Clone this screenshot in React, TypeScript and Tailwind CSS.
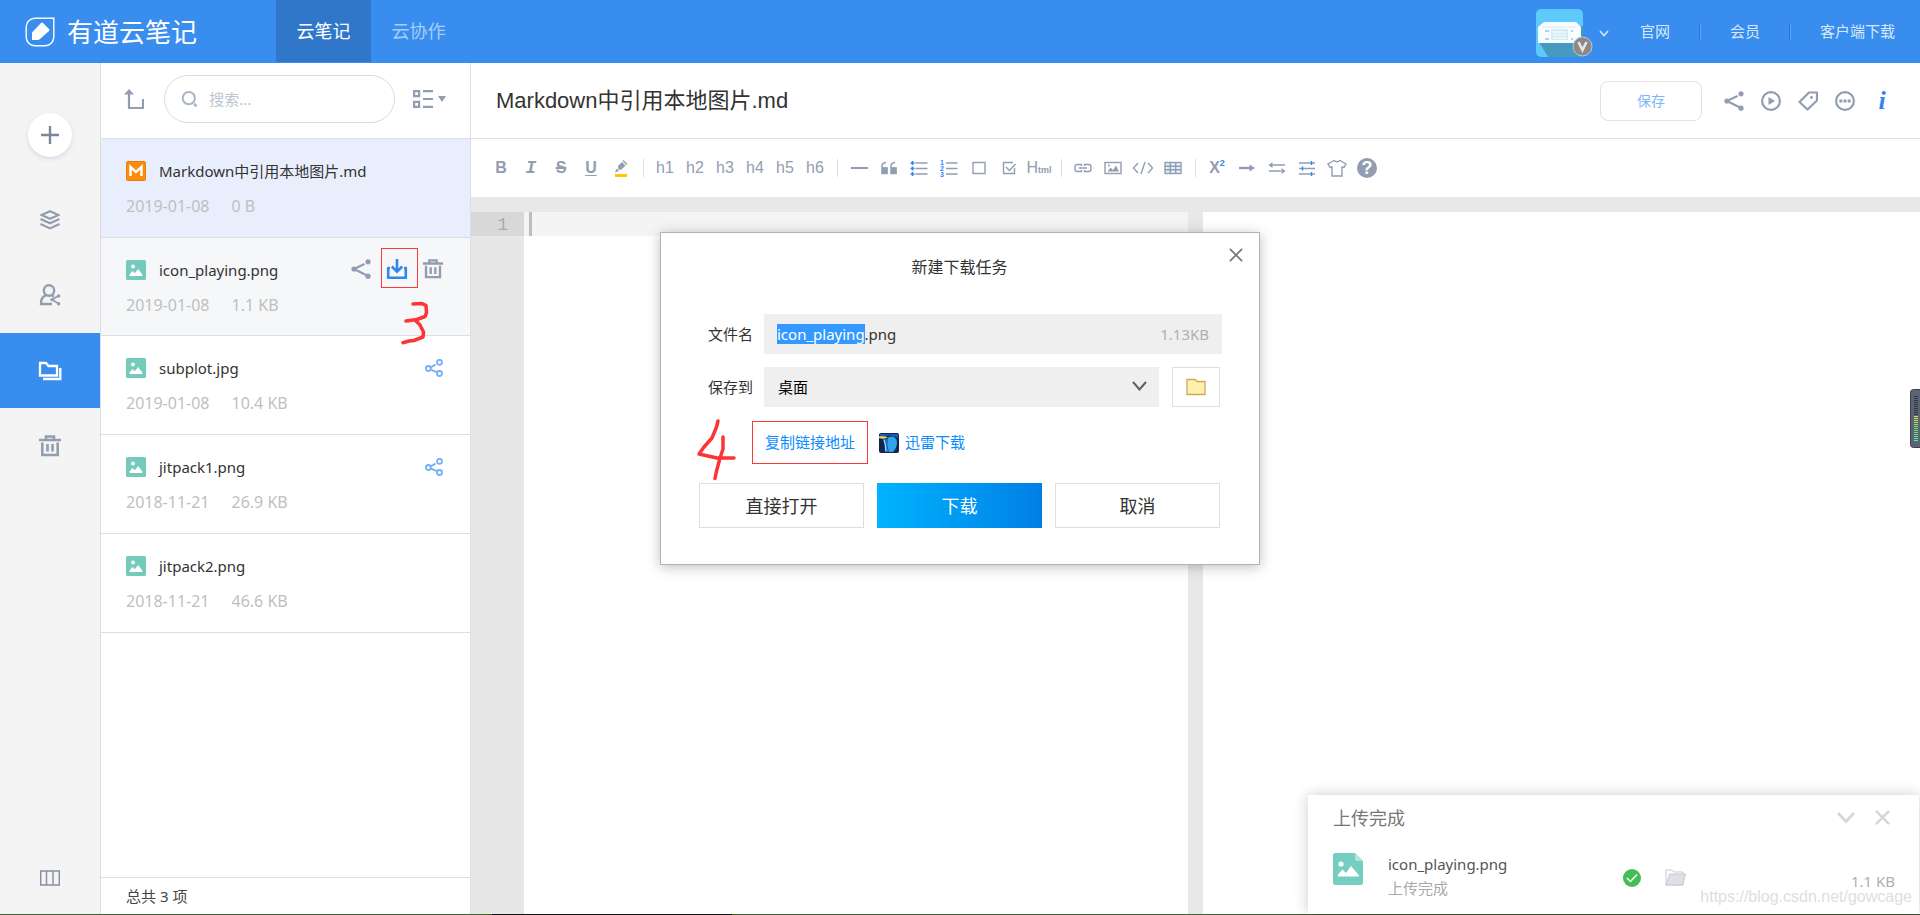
import { useEffect, useRef } from "react";
import type { ReactNode } from "react";

type IconProps = { className?: string };

const files = [
  { name: "Markdown中引用本地图片.md", date: "2019-01-08", size: "0 B", kind: "md", state: "selected" },
  { name: "icon_playing.png", date: "2019-01-08", size: "1.1 KB", kind: "img", state: "hover" },
  { name: "subplot.jpg", date: "2019-01-08", size: "10.4 KB", kind: "img", state: "shared" },
  { name: "jitpack1.png", date: "2018-11-21", size: "26.9 KB", kind: "img", state: "shared" },
  { name: "jitpack2.png", date: "2018-11-21", size: "46.6 KB", kind: "img", state: "" },
];

const rowStyle: Record<string, string> = {
  selected: "h-[99px] bg-[#e8eefb]",
  hover: "h-[98px] bg-[#f6f7f9]",
};

/* ---------- icons ---------- */

function LogoIcon() {
  return (
    <svg width="30" height="30" viewBox="0 0 30 30" fill="none">
      <path d="M10 1.2H28.8V20a8.8 8.8 0 0 1-8.8 8.8H10A8.8 8.8 0 0 1 1.2 20V10A8.8 8.8 0 0 1 10 1.2Z" stroke="#fff" strokeWidth="1.4" />
      <path d="M7 23V15.5L16 6q1-1 2 0l6 6q1 1 0 2l-9 8q-1 1-2 1Z" fill="#fff" />
    </svg>
  );
}

function ShareIcon({ className }: IconProps) {
  return (
    <svg width="20" height="20" viewBox="0 0 20 20" className={className} fill="currentColor">
      <path d="M13.500 5 3 10l14 7" stroke="currentColor" strokeWidth="2.200" fill="none" />
      <circle cx="17" cy="2.8" r="2.6" />
      <circle cx="3" cy="10" r="2.6" />
      <circle cx="17" cy="17.2" r="2.6" />
    </svg>
  );
}

function SharedIcon() {
  return (
    <svg width="18" height="18" viewBox="0 0 18 18" fill="none" stroke="#75aff5" strokeWidth="1.8">
      <circle cx="14.5" cy="3.3" r="2.5" />
      <circle cx="3.3" cy="9.5" r="2.5" />
      <circle cx="14.5" cy="14.5" r="2.5" />
      <path d="m5.8 8.2 4.7-2.6M5.8 10.6l6 2.6" />
    </svg>
  );
}

function TrashIcon({ className }: IconProps) {
  return (
    <svg width="22" height="22" viewBox="0 0 22 22" className={className} fill="none" stroke="currentColor" strokeWidth="2.6">
      <path d="M0 5h22M7 4.5V1.5h8v3" />
      <path d="M3.3 7.5V20h15.400V7.5" />
      <path d="M8.5 9v7.500M13.5 9v7.500" />
    </svg>
  );
}

function DownloadIcon() {
  return (
    <svg width="22" height="22" viewBox="0 0 22 22" fill="none" stroke="#2f86ee" strokeWidth="2.6">
      <path d="M11 1v13M5.800 8.500l5.200 5.200L16.200 8.500" />
      <path d="M4 10H2.200V19.8h17.6V10H18" strokeLinejoin="round" />
    </svg>
  );
}

function LayersIcon() {
  return (
    <svg width="20" height="20" viewBox="0 0 20 20" fill="none" stroke="currentColor" strokeWidth="2.2">
      <path d="M10 1.2 18.5 5 10 8.8 1.5 5Z" />
      <path d="m.5 9 9.5 4.3L19.5 9M.5 14l9.5 4.4 9.5-4.4" />
    </svg>
  );
}

function UserShareIcon() {
  return (
    <svg width="22" height="22" viewBox="0 0 22 22" fill="none" stroke="currentColor" strokeWidth="2.4">
      <circle cx="10" cy="6.5" r="5.2" />
      <path d="M13 20H2c0-5 1-7 5-8.800M13 11.500l2 1.300" />
      <path d="m20 11.500-7 4.200 7 4" strokeWidth="1.700" />
      <circle cx="19.700" cy="12" r="1.700" fill="currentColor" stroke="none" />
      <circle cx="13" cy="15.600" r="1.700" fill="currentColor" stroke="none" />
      <circle cx="19.700" cy="19.700" r="1.700" fill="currentColor" stroke="none" />
    </svg>
  );
}

function FoldersIcon() {
  return (
    <svg width="24" height="20" viewBox="0 0 24 20" fill="none" stroke="#fff" strokeWidth="2.3">
      <path d="M2 14.500V2h6l2.500 3H19v9.500Z" />
      <path d="M22.300 7v11H5" />
    </svg>
  );
}

function ImageFileIcon() {
  return (
    <svg width="20" height="20" viewBox="0 0 20 20">
      <rect width="20" height="20" rx="1.500" fill="#74cbbc" />
      <circle cx="7" cy="6.500" r="1.900" fill="#fff" />
      <path d="M3.500 16v-1.500L6.500 11l2.300 2.300L12.200 9l4.100 5.500V16Z" fill="#fff" />
    </svg>
  );
}

function MarkdownFileIcon() {
  return (
    <svg width="20" height="20" viewBox="0 0 20 20">
      <rect x=".5" y=".5" width="19" height="19" rx="1" fill="#fb8c0c" stroke="#e67e0a" />
      <path d="M4.500 15V6l5.500 5 5.500-5v9" fill="none" stroke="#fff" strokeWidth="2.400" />
    </svg>
  );
}

function Avatar() {
  return (
    <svg width="58" height="48" viewBox="0 0 58 48">
      <rect width="47" height="48" rx="5" fill="#5ec9fb" />
      <path d="M3 33 45 17h2v26a5 5 0 0 1-5 5H12Z" fill="#4699c0" />
      <path d="M8 13h32l5 5v16H2V18Z" fill="#f7fcfe" />
      <path d="M6 18h34" stroke="#d5eaf2" />
      <rect x="15" y="20" width="17" height="11" fill="#d3ecf5" />
      <path d="M17 23h13M17 26h13M17 29h13" stroke="#fff" />
      <path d="M9 22h4M9 30h4M35 22h2M35 30h2" stroke="#a5d7ec" strokeWidth="2" />
      <circle cx="46.500" cy="37.500" r="9.500" fill="#8a8a8a" stroke="#c9c6c2" />
      <path d="m42.500 33 4 8 4-8" fill="none" stroke="#e9e6e3" strokeWidth="2.600" />
    </svg>
  );
}

function Chevron({ className, w, h, stroke }: IconProps & { w: number; h: number; stroke: number }) {
  return (
    <svg width={w} height={h} viewBox={`0 0 ${w} ${h}`} className={className} fill="none" stroke="currentColor" strokeWidth={stroke}>
      <path d={`M1 1 ${w / 2} ${h - 1.5} ${w - 1} 1`} />
    </svg>
  );
}

function Cross({ className, size, stroke }: IconProps & { size: number; stroke: number }) {
  return (
    <svg width={size} height={size} viewBox="0 0 16 16" className={className} stroke="currentColor" strokeWidth={stroke}>
      <path d="m1 1 14 14M15 1 1 15" />
    </svg>
  );
}

function Glyph({ children, w = 20, h = 20, stroke = 1.4 }: { children: ReactNode; w?: number; h?: number; stroke?: number }) {
  return (
    <svg width={w} height={h} viewBox={`0 0 ${w} ${h}`} fill="none" stroke="currentColor" strokeWidth={stroke}>
      {children}
    </svg>
  );
}

/* ---------- toolbar ---------- */

const toolGroups: { label: string; icon: ReactNode }[][] = [
  [
    { label: "粗体", icon: <span className="font-bold">B</span> },
    { label: "斜体", icon: <span className="font-['Liberation_Mono'] text-lg font-bold italic">I</span> },
    {
      label: "删除线",
      icon: <span className="font-bold line-through decoration-2">S</span>,
    },
    { label: "下划线", icon: <span className="font-bold underline underline-offset-2">U</span> },
    {
      label: "高亮",
      icon: (
        <Glyph>
          <path d="M4 17.500h12" stroke="#ffc800" strokeWidth="3" />
          <path d="m7 8 4-4 3.500 3.500-4 4-3 .5Z" fill="currentColor" stroke="none" />
          <path d="m12 2.500 4 4" />
          <path d="M4 14.500 5.500 10.500l2.500 2.500Z" fill="currentColor" stroke="none" />
        </Glyph>
      ),
    },
  ],
  ["h1", "h2", "h3", "h4", "h5", "h6"].map((h) => ({ label: h, icon: <span>{h}</span> })),
  [
    { label: "分割线", icon: <Glyph><path d="M2 10h17" strokeWidth="2" /></Glyph> },
    {
      label: "引用",
      icon: (
        <Glyph>
          <path d="M3 10h5v5.500H3V8q0-3 4-3.500M12 10h5v5.500h-5V8q0-3 4-3.500" strokeWidth="1.500" />
          <path d="M3 9.500h5.500V16H3ZM12 9.500h5.500V16H12Z" fill="currentColor" stroke="none" />
        </Glyph>
      ),
    },
    {
      label: "无序列表",
      icon: (
        <Glyph>
          <path d="M6.500 5h12M6.500 10.500h12M6.500 16h12" />
          <path d="M1.500 5h4M3.500 3v4M1.500 10.500h4M3.500 8.500v4M1.500 16h4M3.500 14v4" stroke="#2f86ee" strokeWidth="1.600" />
        </Glyph>
      ),
    },
    {
      label: "有序列表",
      icon: (
        <Glyph>
          <path d="M7 5h11.500M7 10.500h11.500M7 16h11.500" />
          <g fill="#2f86ee" stroke="none" fontSize="7" fontWeight="700" fontFamily="Liberation Sans"><text x="1" y="7">1</text><text x="1" y="13">2</text><text x="1" y="19">3</text></g>
        </Glyph>
      ),
    },
    { label: "方框", icon: <Glyph><rect x="4" y="4.500" width="12" height="11" /></Glyph> },
    { label: "任务", icon: <Glyph><path d="M15.500 10v5.500h-11v-11H14M7 9l3.500 3.500L16.500 6" /></Glyph> },
    {
      label: "Html",
      icon: (
        <span className="flex items-baseline text-base">
          H<span className="text-[9px] font-bold">tml</span>
        </span>
      ),
    },
  ],
  [
    { label: "链接", icon: <Glyph><path d="M8.500 8V6.500H4.500q-2.500 0-2.500 2v3q0 2 2.500 2h4V12M11.500 8V6.500h4q2.500 0 2.500 2v3q0 2-2.500 2h-4V12M6 10h8" /></Glyph> },
    {
      label: "图片",
      icon: (
        <Glyph>
          <rect x="2" y="4.500" width="16" height="11" />
          <path d="m4.500 13.500 3-4 2.500 2.500 3-4.500 3 6Z" fill="currentColor" stroke="none" />
          <circle cx="6" cy="7.500" r="1" fill="currentColor" stroke="none" />
        </Glyph>
      ),
    },
    { label: "代码", icon: <Glyph w={22}><path d="M6 5 1.500 10 6 15M16 5l4.500 5-4.500 5M13 4 9 16" /></Glyph> },
    {
      label: "表格",
      icon: (
        <Glyph>
          <rect x="2" y="4.500" width="16" height="11" fill="#e3f0fd" />
          <path d="M2 8.200h16M2 11.800h16M7.300 4.500v11M12.700 4.500v11" />
        </Glyph>
      ),
    },
  ],
  [
    {
      label: "上标",
      icon: (
        <span className="flex items-start leading-5 font-bold">
          X<span className="text-[9px] leading-[10px] text-[#2f86ee]">2</span>
        </span>
      ),
    },
    { label: "右箭头", icon: <Glyph><path d="M2 10h11" strokeWidth="2.400" /><path d="m12.500 6.500 5.500 3.500-5.500 3.500Z" fill="currentColor" stroke="none" /></Glyph> },
    {
      label: "流程图",
      icon: (
        <Glyph>
          <path d="M4 7h14M2 13h12" />
          <path d="M1.500 7l4-3v6ZM18.500 13l-4-3v6Z" fill="currentColor" stroke="none" />
        </Glyph>
      ),
    },
    {
      label: "时序图",
      icon: (
        <Glyph>
          <path d="M2 5h16M2 10.500h16M2 16h16" />
          <path d="M14.500 3v4M5.500 8.500v4M14.500 14v4" stroke="#2f86ee" />
        </Glyph>
      ),
    },
    { label: "主题", icon: <Glyph><path d="M7 2.500 1 6l2 3.500 2-.5V18h10V9l2 .5L19 6l-6-3.500q-3 2.500-6 0Z" /></Glyph> },
    {
      label: "帮助",
      icon: (
        <span className="flex size-5 items-center justify-center rounded-full bg-[#929db1] text-lg leading-5 font-bold text-white">?</span>
      ),
    },
  ],
];

function Toolbar() {
  return (
    <div className="flex h-[58px] items-center bg-white pl-[15px] font-['Liberation_Sans',sans-serif] text-base text-[#929db1]">
      {toolGroups.map((group, i) => (
        <div key={i} className="flex items-center">
          {i > 0 && (
            <div className="flex w-[14px] justify-center">
              <div className="h-[18px] w-px bg-[#dcdee2]" />
            </div>
          )}
          {group.map((tool) => (
            <button key={tool.label} type="button" aria-label={tool.label} className="flex h-8 w-[30px] items-center justify-center">
              {tool.icon}
            </button>
          ))}
        </div>
      ))}
    </div>
  );
}

/* ---------- page parts ---------- */

function Header() {
  return (
    <header className="flex h-[63px] shrink-0 items-center bg-[#398dee] text-white">
      <div className="flex w-[276px] items-center gap-3 pl-[25px]">
        <LogoIcon />
        <span className="text-[26px] leading-8">有道云笔记</span>
      </div>
      <nav className="flex h-full text-lg">
        <a href="#note" className="mb-px flex w-[95px] items-center justify-center bg-[#3077c9]">
          云笔记
        </a>
        <a href="#team" className="mb-px flex w-[95px] items-center justify-center text-[#a6cdf8]">
          云协作
        </a>
      </nav>
      <div className="ml-auto flex items-center pr-[25px] text-[15px] text-[#d7e8fc]">
        <button type="button" aria-label="账户" className="mt-[3px] mr-[31px] flex items-center gap-[5px]">
          <Avatar />
          <Chevron w={10} h={7} stroke={1.5} />
        </button>
        <a href="#site">官网</a>
        <span className="mx-[29px] h-[18px] w-[2px] border-l border-[#2d74cc] bg-[#5da4f5]" />
        <a href="#vip">会员</a>
        <span className="mx-[29px] h-[18px] w-[2px] border-l border-[#2d74cc] bg-[#5da4f5]" />
        <a href="#client">客户端下载</a>
      </div>
    </header>
  );
}

function Sidebar() {
  return (
    <aside className="flex w-[101px] shrink-0 flex-col border-r border-[#dcdee3] bg-[#f4f4f4] text-[#929db1]">
      <button
        type="button"
        aria-label="新建"
        className="mx-auto mt-[50px] mb-[26px] flex size-11 items-center justify-center rounded-full bg-white text-[#7c869a] shadow-[0_2px_4px_rgba(130,145,190,0.25)]"
      >
        <svg width="18" height="18" viewBox="0 0 18 18" stroke="currentColor" strokeWidth="2.4">
          <path d="M9 0v18M0 9h18" />
        </svg>
      </button>
      <button type="button" aria-label="最新文档" className="flex h-[75px] items-center justify-center pb-0.5">
        <LayersIcon />
      </button>
      <button type="button" aria-label="与我分享" className="flex h-[75px] items-center justify-center pb-0.5">
        <UserShareIcon />
      </button>
      <button type="button" aria-label="我的文件夹" className="flex h-[75px] items-center justify-center bg-[#398dee]">
        <FoldersIcon />
      </button>
      <button type="button" aria-label="回收站" className="flex h-[75px] items-center justify-center">
        <TrashIcon />
      </button>
      <button type="button" aria-label="布局" className="mt-auto mb-7 flex justify-center text-[#858e9f]">
        <svg width="20" height="16" viewBox="0 0 20 16" fill="none" stroke="currentColor" strokeWidth="1.4">
          <path d="M.7 1h18.600v14H.7ZM6.500 1v14M13 1v14" />
        </svg>
      </button>
    </aside>
  );
}

function FileList() {
  return (
    <section className="flex w-[370px] shrink-0 flex-col border-r border-[#dcdee3] bg-white">
      <div className="flex h-[76px] shrink-0 items-center border-b border-[#dcdee3] pr-6 pb-[3px] pl-[23px] text-[#929db1]">
        <button type="button" aria-label="返回上级" className="mr-5">
          <svg width="20" height="20" viewBox="0 0 20 20" fill="none" stroke="currentColor" strokeWidth="2.2">
            <path d="M5 3v16h14V10" />
            <path d="M0 5.500 5 0l5 5.500Z" fill="currentColor" stroke="none" />
          </svg>
        </button>
        <label className="flex h-12 flex-1 items-center gap-[11px] rounded-full border border-[#dcdcdc] pl-4">
          <svg width="20" height="20" viewBox="0 0 20 20" fill="none" stroke="#aab6c6" strokeWidth="2.400">
            <circle cx="9" cy="9" r="7" />
            <path d="m15 15.500 3 3" strokeWidth="3" />
          </svg>
          <input aria-label="搜索" placeholder="搜索..." className="w-full bg-transparent text-[15px] outline-none placeholder:text-[#bcc4ce]" />
        </label>
        <button type="button" aria-label="排列方式" className="ml-[18px] flex items-center gap-[5px]">
          <svg width="20" height="18" viewBox="0 0 20 18" fill="none" stroke="currentColor" strokeWidth="2.2">
            <path d="M1.100 1.100h5v5h-5ZM1.100 11.900h5v5h-5ZM10 1.100h10M10 9h10M10 16.900h10" />
          </svg>
          <svg width="8" height="6" viewBox="0 0 8 6" fill="currentColor">
            <path d="M0 0h8L4 6Z" />
          </svg>
        </button>
      </div>
      <ul className="flex-1">
        {files.map((file) => (
          <li key={file.name} className={`border-b border-[#dcdee3] pt-[21px] pr-[27px] pl-[25px] ${rowStyle[file.state] ?? "h-[99px]"}`}>
            <div className="flex h-[22px] items-center text-[15px] text-[#333]">
              {file.kind === "md" ? <MarkdownFileIcon /> : <ImageFileIcon />}
              <span className="ml-[13px]">{file.name}</span>
              {file.state === "hover" && (
                <span className="ml-auto flex items-center gap-[15px] pb-0.5 text-[#929db1]">
                  <button type="button" aria-label="分享"><ShareIcon /></button>
                  <button type="button" aria-label="下载"><DownloadIcon /></button>
                  <button type="button" aria-label="删除"><TrashIcon className="size-5" /></button>
                </span>
              )}
              {file.state === "shared" && (
                <button type="button" aria-label="已分享" className="ml-auto"><SharedIcon /></button>
              )}
            </div>
            <div className="mt-[13px] flex gap-[22px] text-base leading-[22px] text-[#bfbfbf]">
              <span>{file.date}</span>
              <span>{file.size}</span>
            </div>
          </li>
        ))}
      </ul>
      <div className="flex h-[37px] shrink-0 items-center border-t border-[#dcdee3] pl-[25px] text-[15px] text-[#444]">总共 3 项</div>
    </section>
  );
}

function Editor() {
  return (
    <main className="flex min-w-0 flex-1 flex-col bg-[#e8e8e8]">
      <div className="flex h-[76px] shrink-0 items-center border-b border-[#dcdee3] bg-white pr-7 pl-[25px] text-[#929db1]">
        <h1 className="font-['Liberation_Sans','Noto_Sans_CJK_SC',sans-serif] text-[22px] text-[#333]">Markdown中引用本地图片.md</h1>
        <button type="button" className="mr-[22px] ml-auto h-10 w-[102px] rounded-lg border border-[#e2e2e2] text-sm text-[#82b5f7]">
          保存
        </button>
        <div className="flex items-center gap-[17px]">
          <button type="button" aria-label="分享"><ShareIcon /></button>
          <button type="button" aria-label="播放">
            <Glyph stroke={2.2}>
              <circle cx="10" cy="10" r="8.900" />
              <path d="M7.500 6v8l6.500-4Z" fill="currentColor" stroke="none" />
            </Glyph>
          </button>
          <button type="button" aria-label="标签">
            <Glyph stroke={2.2}>
              <path d="M11 1.500h8v8L9.500 18.500l-8-7.500Z" strokeLinejoin="round" />
              <circle cx="13.500" cy="6.500" r="1.400" fill="currentColor" stroke="none" />
            </Glyph>
          </button>
          <button type="button" aria-label="更多">
            <Glyph stroke={2.2}>
              <circle cx="10" cy="10" r="8.900" />
              <path d="M4.300 10h3M8.500 10h3M12.700 10h3" strokeWidth="3" />
            </Glyph>
          </button>
          <button type="button" aria-label="信息" className="w-5 font-['Liberation_Serif',serif] text-[26px] leading-6 font-bold text-[#2f86ee] italic">
            i
          </button>
        </div>
      </div>
      <Toolbar />
      <div className="mt-[15px] flex min-h-0 flex-1">
        <div className="w-[53px] shrink-0 bg-[#e7e7e7]">
          <div className="h-6 bg-[#d8d8d8] pr-4 text-right font-['Liberation_Mono',monospace] text-lg leading-[26px] text-[#aaa]">1</div>
        </div>
        <div className="flex-[664] bg-white">
          <div className="flex h-6 bg-[#f4f4f4] pl-[5px]">
            <span className="w-[3px] bg-[#bdbdbd]" />
            <textarea aria-label="正文" className="h-6 flex-1 resize-none bg-transparent outline-none" />
          </div>
        </div>
        <div className="ml-[15px] flex-[717] bg-white" />
      </div>
    </main>
  );
}

function DownloadDialog() {
  const nameRef = useRef<HTMLInputElement>(null);

  // preselect the base name, leaving the extension untouched
  useEffect(() => {
    nameRef.current?.focus();
    nameRef.current?.setSelectionRange(0, 12);
  }, []);

  return (
    <div
      role="dialog"
      aria-label="新建下载任务"
      className="absolute top-[232px] left-1/2 w-[600px] -translate-x-1/2 border border-[#b3b3b3] bg-white pt-[22px] pr-[39px] pb-9 pl-[38px] text-[15px] text-[#333] shadow-[0_2px_12px_rgba(0,0,0,0.25)]"
    >
      <button type="button" aria-label="关闭" className="absolute top-[15px] right-4 text-[#777]">
        <Cross size={14} stroke={2} />
      </button>
      <h2 className="text-center text-base">新建下载任务</h2>
      <div className="mt-[35px] -mr-0.5 flex items-center">
        <label htmlFor="file-name" className="w-[65px] pl-[9px]">文件名</label>
        <div className="flex h-10 flex-1 items-center bg-[#efefef] px-[13px]">
          <input
            id="file-name"
            ref={nameRef}
            defaultValue="icon_playing.png"
            className="h-5 min-w-0 flex-1 bg-transparent outline-none selection:bg-[#3399ff] selection:text-white"
          />
          <span className="text-[#b0b0b0]">1.13KB</span>
        </div>
      </div>
      <div className="mt-[13px] flex items-center">
        <label htmlFor="save-to" className="w-[65px] pl-[9px]">保存到</label>
        <div className="relative flex-1">
          <select id="save-to" className="block h-10 w-full appearance-none bg-[#efefef] pl-3.5 text-black outline-none">
            <option>桌面</option>
          </select>
          <Chevron w={15} h={10} stroke={2} className="pointer-events-none absolute top-[14px] right-3 text-[#606060]" />
        </div>
        <button type="button" aria-label="选择文件夹" className="ml-[13px] flex h-10 w-12 items-center justify-center border border-[#dedede]">
          <svg width="20" height="18" viewBox="0 0 20 18" fill="#fff0b0" stroke="#cfa957" strokeWidth="1.3">
            <path d="M1 16.500V1.500h8l2 2h8v13Z" />
          </svg>
        </button>
      </div>
      <div className="mt-3.5 flex h-[43px] items-center pl-[53px] text-[#0a8cff]">
        <a href="#copy" className="flex h-[43px] w-[116px] items-center justify-center border border-[#f53b3b]">复制链接地址</a>
        <a href="#xunlei" className="ml-[11px] flex items-center gap-1.5">
          <svg width="20" height="20" viewBox="0 0 20 20">
            <rect width="20" height="20" rx="2" fill="#15264d" />
            <path d="M1 1h18v4q-9-5-18 0Z" fill="#1c58b5" />
            <path d="M9 4.500q7-3 9 4 0 7-4 10.500h-4q-3-7-1-14.500Z" fill="#2fa3ec" />
            <path d="M4 6q2 6 2 13h4q-3-7-1-13Z" fill="#1d72cc" />
            <path d="M0 3.500q5-1 9 1-4 2-9 .5Z" fill="#f4e04f" />
            <path d="M5 7q2 5 2 11" stroke="#c6ecff" fill="none" />
          </svg>
          迅雷下载
        </a>
      </div>
      <div className="mt-[19px] grid grid-cols-3 gap-[13px] text-lg">
        <button type="button" className="h-[45px] border border-[#dedede]">直接打开</button>
        <button type="button" className="h-[45px] bg-linear-to-r from-[#00b4ff] to-[#007fe5] text-white">下载</button>
        <button type="button" className="h-[45px] border border-[#dedede]">取消</button>
      </div>
    </div>
  );
}

function UploadPanel() {
  return (
    <div className="absolute right-px bottom-px h-[119px] w-[611px] bg-white pr-6 pl-[25px] shadow-[0_0_14px_rgba(0,0,0,0.2)]">
      <div className="flex h-[45px] items-center text-lg text-[#777]">
        上传完成
        <button type="button" aria-label="收起" className="mr-5 ml-auto text-[#d6d6d6]"><Chevron w={18} h={11} stroke={2.6} /></button>
        <button type="button" aria-label="关闭" className="mr-[5px] text-[#d6d6d6]"><Cross size={15} stroke={2.6} /></button>
      </div>
      <div className="mt-3 flex text-[15px]">
        <svg width="30" height="32" viewBox="0 0 30 32" className="mt-px">
          <path d="M2 0h20l8 8v22a2 2 0 0 1-2 2H2a2 2 0 0 1-2-2V2a2 2 0 0 1 2-2Z" fill="#74cfc0" />
          <path d="m22 0 8 8h-6a2 2 0 0 1-2-2Z" fill="#b4e4db" />
          <circle cx="8" cy="11" r="2.600" fill="#fff" />
          <path d="M5 23.500v-2l4.500-5 3.500 3.500 5-7 8 9.500v1Z" fill="#fff" />
        </svg>
        <div className="ml-[25px] w-[235px]">
          <p className="leading-6 text-[#555]">icon_playing.png</p>
          <p className="leading-6 text-[#aaa]">上传完成</p>
        </div>
        <svg width="18" height="18" viewBox="0 0 18 18" className="mt-[17px]">
          <circle cx="9" cy="9" r="9" fill="#44bd56" />
          <path d="m4 9 3.500 3.500L14 5.500" fill="none" stroke="#fff" strokeWidth="1.500" />
        </svg>
        <svg width="21" height="17" viewBox="0 0 21 17" className="mt-[17px] ml-6" fill="#fff" stroke="#c6c9cf">
          <path d="M1 16V1h6l2 2h9v13Z" />
          <path d="M1 16 4.500 5H20.500l-3 11Z" fill="#dde0e6" />
        </svg>
        <span className="mt-[17px] ml-auto leading-6 text-[#b0b0b0]">1.1 KB</span>
      </div>
    </div>
  );
}

function Meter() {
  return (
    <svg width="10" height="59" viewBox="0 0 10 59" className="absolute top-[389px] right-0">
      <rect x=".5" y=".5" width="14" height="58" rx="3" fill="#5c6375" stroke="#3b404b" />
      {Array.from({ length: 23 }, (_, i) => (
        <rect key={i} x="4" y={7 + i * 2} width="4" height="1" fill={i < 10 ? "#333742" : `hsl(${60 + (i - 10) * 9} 75% 62%)`} />
      ))}
    </svg>
  );
}

export default function App() {
  return (
    <div className="relative flex h-screen flex-col overflow-hidden bg-white font-['Noto_Sans','Noto_Sans_CJK_SC',sans-serif]">
      <Header />
      <div className="flex min-h-0 flex-1">
        <Sidebar />
        <FileList />
        <Editor />
      </div>
      <div className="flex h-px shrink-0">
        <div className="w-[492px] bg-[#4a5a30]" />
        <div className="w-[240px] bg-[#111]" />
        <div className="flex-1 bg-[#4a5a30]" />
      </div>

      <DownloadDialog />
      <UploadPanel />
      <Meter />

      {/* hand-drawn step marks */}
      <div className="pointer-events-none absolute top-[248px] left-[381px] h-10 w-[37px] border border-[#f53b3b]" />
      <svg width="28" height="44" viewBox="0 0 28 44" className="pointer-events-none absolute top-[301px] left-[401px]" fill="none" stroke="#fd3434" strokeWidth="3.5" strokeLinecap="round" strokeLinejoin="round">
        <path d="M12 3 21 2.500 25 4.500 25.500 12 24 15.500 16 18.500 5 20M15 20 19 24 22.500 31 22 36 13 39.500 8 40 2 41.800" />
      </svg>
      <svg width="42" height="64" viewBox="0 0 42 64" className="pointer-events-none absolute top-[418px] left-[696px]" fill="none" stroke="#fd3434" strokeWidth="3.5" strokeLinecap="round" strokeLinejoin="round">
        <path d="M22 3 20.500 9 16 20 8 29 3 36 21 40 38 40M27 19 27 31 24 40 20.500 53 19 60.500" />
      </svg>
      <span className="pointer-events-none absolute right-2 bottom-2 font-['Liberation_Sans',sans-serif] text-base leading-5 text-[#dedede]">
        https://blog.csdn.net/gowcage
      </span>
    </div>
  );
}
